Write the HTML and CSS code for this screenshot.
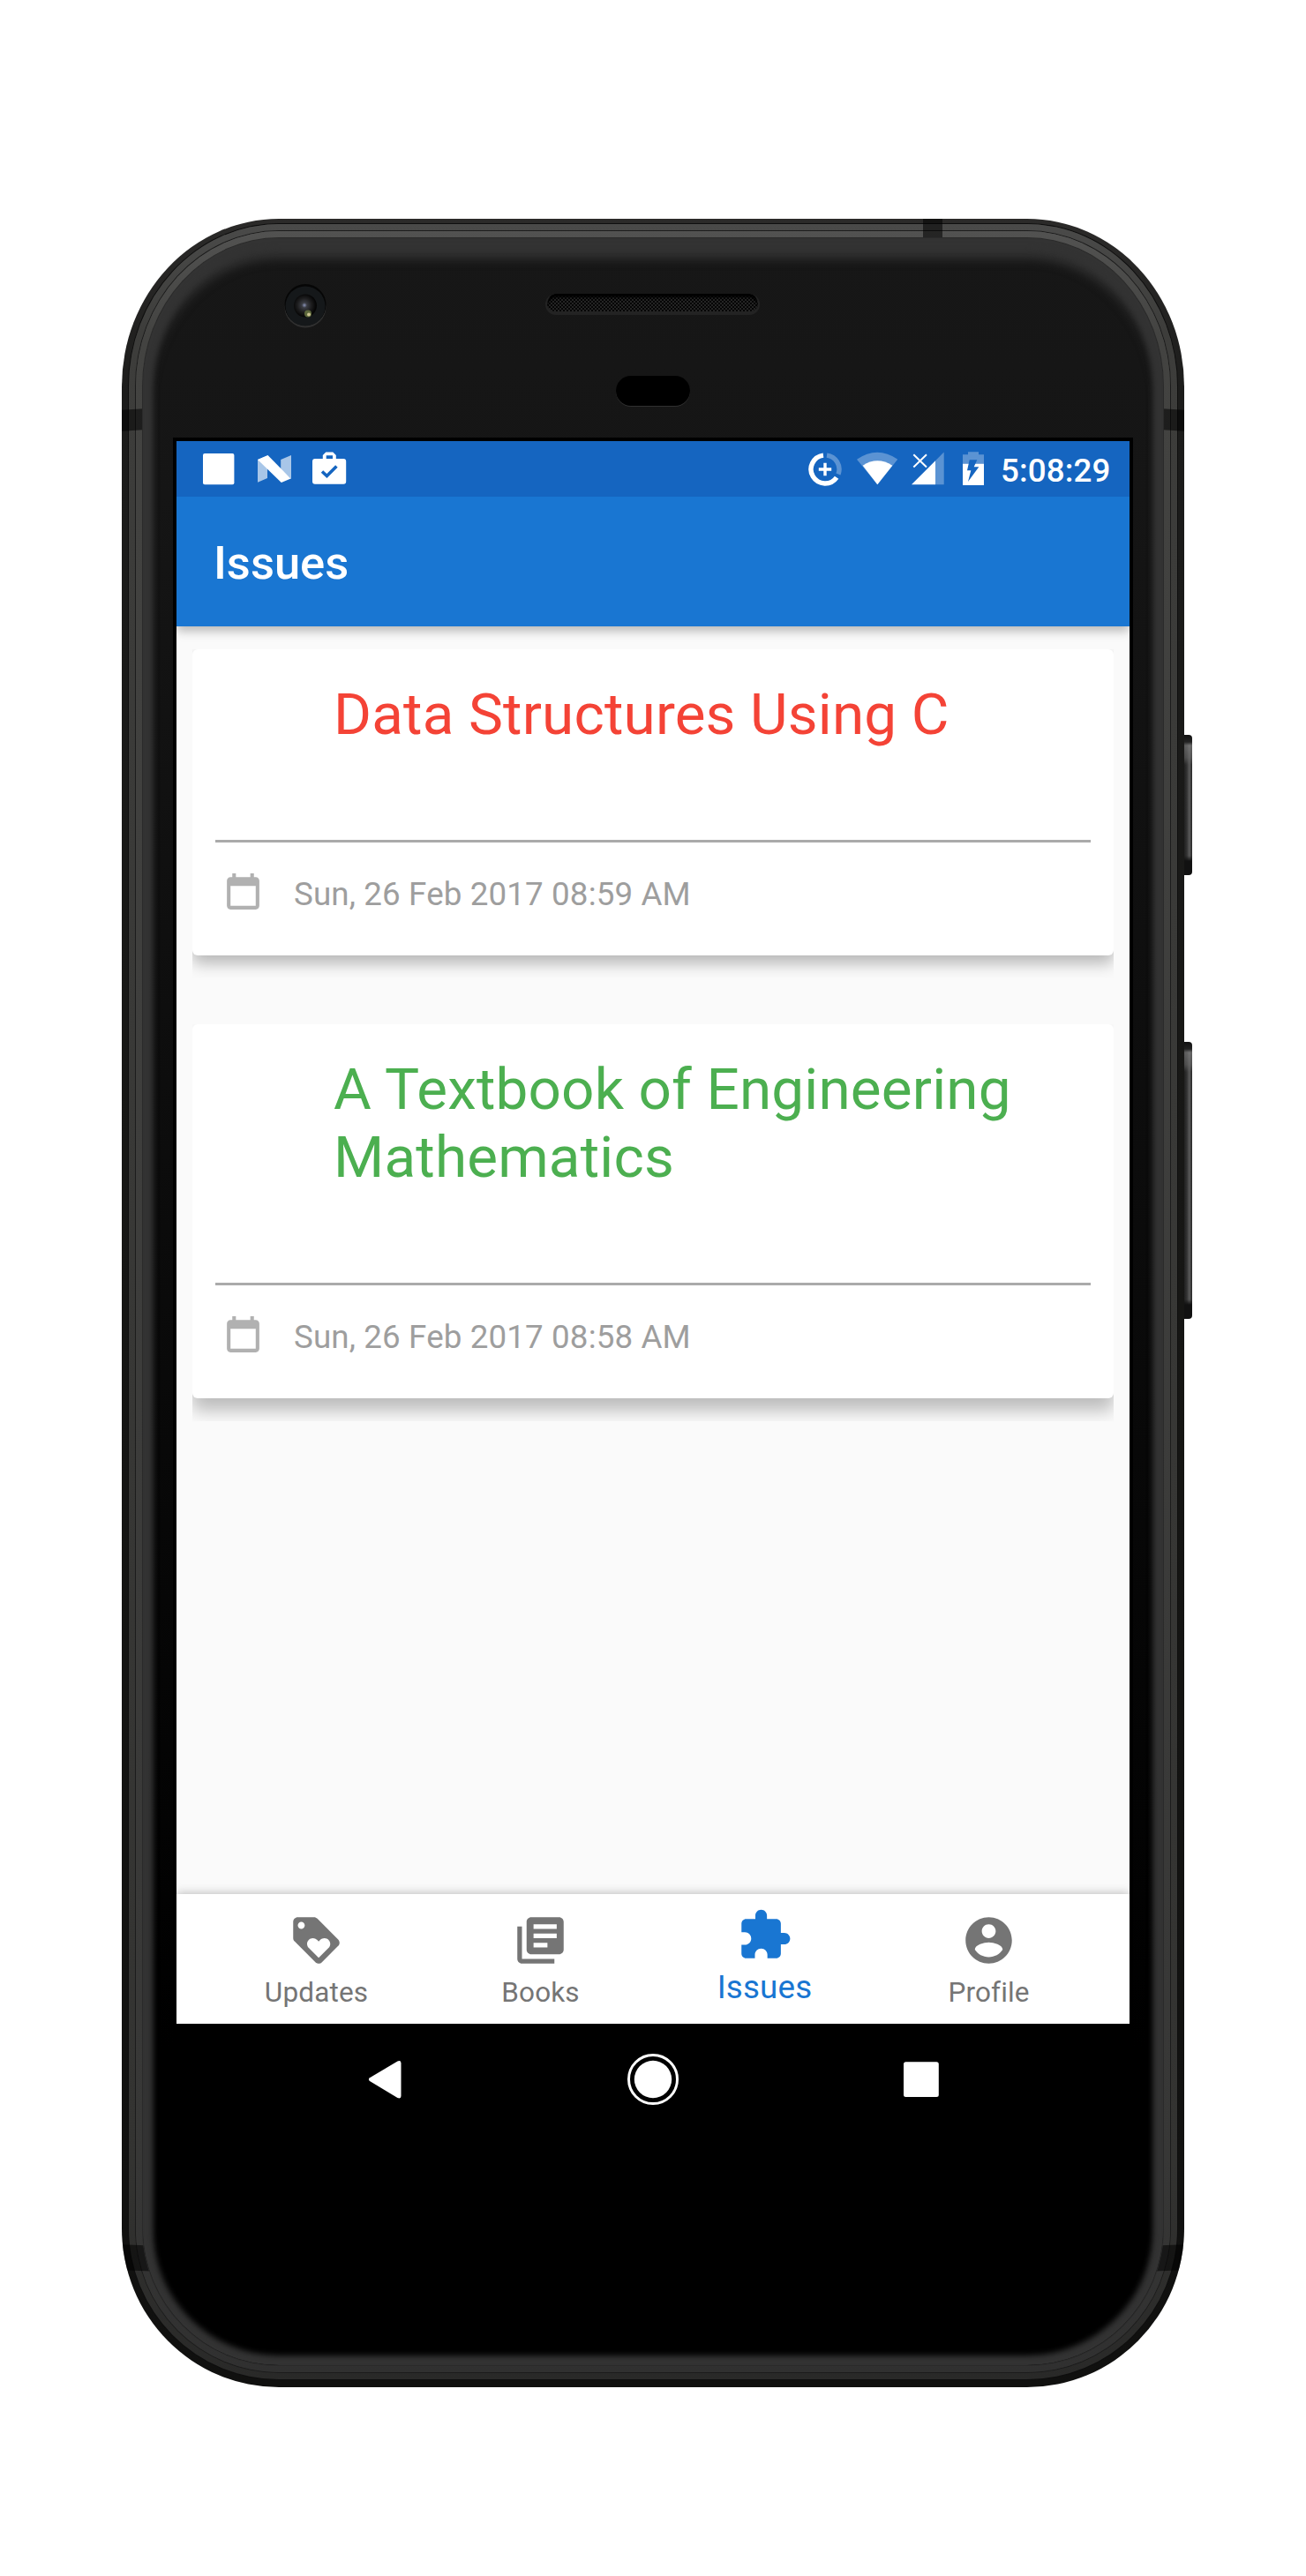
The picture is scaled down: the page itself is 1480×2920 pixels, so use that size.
FILE: index.html
```html
<!DOCTYPE html>
<html lang="en">
<head>
<meta charset="utf-8">
<title>Issues</title>
<link rel="stylesheet" href="styles.css">
</head>
<body>
<div class="device">
  <span class="side-button power"></span>
  <span class="side-button volume"></span>
  <div class="rim rim-outer">
    <span class="band band-left"></span>
    <span class="band band-right"></span>
    <span class="band band-top"></span>
    <span class="band band-low-left"></span>
    <span class="band band-low-right"></span>
    <div class="rim rim-middle">
      <div class="rim rim-inner">
        <div class="panel">
          <svg class="camera" viewBox="0 0 50 52">
            <defs>
              <radialGradient id="lens" cx=".46" cy=".48" r=".5">
                <stop offset="0" stop-color="#8a93b8"/><stop offset=".22" stop-color="#3b3d44"/>
                <stop offset=".6" stop-color="#1e1e1f"/><stop offset="1" stop-color="#050505"/>
              </radialGradient>
            </defs>
            <circle cx="25" cy="27" r="23.5" fill="#303030"/>
            <circle cx="25" cy="24.5" r="23.5" fill="#060606"/>
            <circle cx="25" cy="26" r="22.500" fill="#15181a"/>
            <circle cx="25" cy="25.5" r="13" fill="url(#lens)"/>
            <circle cx="28" cy="34.5" r="4" fill="#6d7a45" opacity=".8"/>
            <circle cx="29" cy="35.5" r="2" fill="#c9c290"/>
          </svg>
          <span class="speaker"></span>
          <span class="sensor"></span>

          <div class="screen">
            <header class="status-bar">
              <svg class="st-square" width="36" height="63" viewBox="0 0 36 63"><rect x="0" y="14" width="35.4" height="35.3" rx="2" fill="#fff"/></svg>
              <svg class="st-n" width="38" height="63" viewBox="0 0 38 63" fill="#fff"><path d="M0 21l11-4.500V42L0 46.700zM26.200 21L38 16v27l-11.800-11z" opacity=".63"/><path d="M0 21l11.500-5L37.500 42.500 26.800 47z"/></svg>
              <svg class="st-bag" width="39" height="63" viewBox="0 0 39 63"><path fill="#fff" fill-rule="evenodd" d="M3 20h8.800v-4l3.500-3.500h8L26.800 16v4h8.400a3 3 0 0 1 3 3v22.700a3 3 0 0 1-3 3H3a3 3 0 0 1-3-3V23a3 3 0 0 1 3-3zM15.700 20H23v-3.700h-7.300z"/><path d="M11 34.500l5.400 5 11-11" fill="none" stroke="#1565c0" stroke-width="3.600"/></svg>
              <svg class="st-data" width="38" height="63" viewBox="0 0 38 63" fill="none" stroke="#fff" stroke-width="5.400"><path d="M17 16.100A16 16 0 1 0 32.100 41.200"/><path d="M21 16.100A16 16 0 0 1 34 37.500" opacity=".3"/><path d="M11.800 32h14.400M19 24.800v14.400" stroke-width="3.400"/></svg>
              <svg class="st-wifi" width="46" height="63" viewBox="0 0 46 63" fill="#fff"><path d="M0 20.700Q23.200 4.800 46.300 20.700L23.300 49.300z" opacity=".3"/><path d="M6.700 27.700Q23.300 16.800 40.300 27.700L23.300 49.300z"/></svg>
              <svg class="st-signal" width="37" height="63" viewBox="0 0 37 63" fill="#fff"><path d="M27 22.300l9.700-9.700v36.700H27z" opacity=".3"/><path d="M0 49.300l27-27v27z"/><path d="M2.300 15.300l14.700 14.200M17 15.300L2.300 29.500" stroke="#fff" stroke-width="2"/></svg>
              <svg class="st-battery" width="24" height="63" viewBox="0 0 24 63"><path d="M0 15.300h6v-3h12v3h6v10.400H0z" fill="#fff" opacity=".3"/><path d="M0 25.700h24V50H0z" fill="#fff"/><path d="M7.700 21.300h8.600l-3.600 8h5.600L6 46l3.300-12.700H5z" fill="#1565c0"/></svg>
              <span class="clock">5:08:29</span>
            </header>

            <div class="toolbar">Issues</div>

            <main class="content">
              <article class="card">
                <h2 class="card-title overdue">Data Structures Using C</h2>
                <div class="card-date">
                  <svg class="cal" viewBox="0 0 24 24"><path d="M19 3h-1V1h-2v2H8V1H6v2H5c-1.110 0-1.990.9-1.990 2L3 19c0 1.100.890 2 2 2h14c1.100 0 2-.9 2-2V5c0-1.100-.9-2-2-2zm0 16H5V8h14v11z"/></svg>
                  <span>Sun, 26 Feb 2017 08:59 AM</span>
                </div>
              </article>
              <article class="card raised">
                <h2 class="card-title open">A Textbook of Engineering Mathematics</h2>
                <div class="card-date">
                  <svg class="cal" viewBox="0 0 24 24"><path d="M19 3h-1V1h-2v2H8V1H6v2H5c-1.110 0-1.990.9-1.990 2L3 19c0 1.100.890 2 2 2h14c1.100 0 2-.9 2-2V5c0-1.100-.9-2-2-2zm0 16H5V8h14v11z"/></svg>
                  <span>Sun, 26 Feb 2017 08:58 AM</span>
                </div>
              </article>
            </main>

            <nav class="tabs">
              <div class="tab">
                <svg viewBox="0 0 24 24"><path d="M21.410 11.580l-9-9C12.050 2.220 11.550 2 11 2H4c-1.100 0-2 .9-2 2v7c0 .550.220 1.050.590 1.420l9 9c.360.360.860.580 1.410.580.550 0 1.050-.220 1.410-.590l7-7c.370-.360.590-.860.590-1.410 0-.550-.230-1.060-.590-1.420zM5.500 7C4.670 7 4 6.330 4 5.500S4.670 4 5.500 4 7 4.670 7 5.500 6.330 7 5.500 7zm11.770 8.270L13 19.540l-4.270-4.270C8.280 14.810 8 14.190 8 13.500c0-1.380 1.120-2.500 2.500-2.500.690 0 1.320.280 1.770.740l.730.720.730-.730c.450-.450 1.080-.730 1.770-.730 1.380 0 2.500 1.120 2.500 2.500 0 .690-.280 1.320-.730 1.770z"/></svg>
                <span>Updates</span>
              </div>
              <div class="tab">
                <svg viewBox="0 0 24 24"><path d="M4 6H2v14c0 1.100.9 2 2 2h14v-2H4V6zm16-4H8c-1.100 0-2 .9-2 2v12c0 1.100.9 2 2 2h12c1.100 0 2-.9 2-2V4c0-1.100-.9-2-2-2zm-1 9H9V9h10v2zm-4 4H9v-2h6v2zm4-8H9V5h10v2z"/></svg>
                <span>Books</span>
              </div>
              <div class="tab active">
                <svg viewBox="0 0 24 24"><path d="M20.500 11H19V7c0-1.100-.9-2-2-2h-4V3.500C13 2.120 11.880 1 10.500 1S8 2.120 8 3.500V5H4c-1.100 0-1.990.9-1.990 2v3.800H3.500c1.490 0 2.700 1.210 2.700 2.700s-1.210 2.700-2.700 2.700H2V20c0 1.100.9 2 2 2h3.800v-1.500c0-1.490 1.210-2.700 2.700-2.700 1.490 0 2.700 1.210 2.700 2.700V22H17c1.100 0 2-.9 2-2v-4h1.500c1.380 0 2.500-1.120 2.500-2.500S21.880 11 20.500 11z"/></svg>
                <span>Issues</span>
              </div>
              <div class="tab">
                <svg viewBox="0 0 24 24"><path d="M12 2C6.480 2 2 6.480 2 12s4.480 10 10 10 10-4.480 10-10S17.520 2 12 2zm0 3c1.660 0 3 1.340 3 3s-1.340 3-3 3-3-1.340-3-3 1.340-3 3-3zm0 14.200c-2.500 0-4.710-1.280-6-3.220.030-1.990 4-3.080 6-3.080 1.990 0 5.970 1.090 6 3.080-1.290 1.940-3.500 3.220-6 3.220z"/></svg>
                <span>Profile</span>
              </div>
            </nav>

            <div class="system-nav">
              <svg width="60" height="60" viewBox="0 0 60 60"><path d="M12 28.200q-2.300 1.900 0 3.800L43.500 51q4 1.500 4-2V11.500q-.3-3.500-4-2z" fill="#fff"/></svg>
              <svg width="60" height="60" viewBox="0 0 60 60"><circle cx="30" cy="30" r="27.500" fill="none" stroke="#fff" stroke-width="3"/><circle cx="30" cy="30" r="21.200" fill="#fff"/></svg>
              <svg width="60" height="60" viewBox="0 0 60 60"><rect x="11" y="10.300" width="39.800" height="39.800" rx="2.500" fill="#fff"/></svg>
            </div>
          </div>
        </div>
      </div>
    </div>
  </div>
</div>
</body>
</html>
```
FILE: styles.css
```css
* { box-sizing: border-box; }
body {
  margin: 0;
  padding-top: 248px;
  height: 2920px;
  background: #fff;
  font-family: Roboto, "Liberation Sans", sans-serif;
}
svg { display: block; flex: none; }

/* Handset body */
.device { position: relative; width: 1204px; height: 2458px; margin: 0 auto; }
.rim-outer {
  position: relative;
  height: 2458px;
  padding: 6px 8px 9px;
  overflow: hidden;
  border-radius: 178px / 190px 190px 180px 180px;
  background: linear-gradient(#2b2a29, #1c1c1b 8%, #161614 50%, #10100f);
}
.rim-middle {
  height: 2443px;
  padding: 8px;
  border-radius: 170px / 184px 184px 171px 171px;
  background: linear-gradient(#4a4a49, #3d3d3b 5%, #333331 90%, #292928);
  box-shadow: 0 0 0 1px #0e0e0e;
}
.rim-inner {
  height: 2427px;
  padding: 8px;
  border-radius: 162px / 176px 176px 163px 163px;
  background: linear-gradient(#525251, #434341 5%, #373736 90%, #303030);
  box-shadow: 0 0 0 1px #1c1c1c;
}
.panel {
  position: relative;
  z-index: 2;
  height: 2411px;
  padding: 226px 34px 0;
  border-radius: 154px / 168px 168px 155px 155px;
  background: linear-gradient(#171717, #151515 12%, #0a0a0a 50%, #000 85%);
  box-shadow: inset 0 0 6px 11px #333, inset 0 17px 12px 6px #333, 0 0 0 1px #2a2a2a;
}
.band { position: absolute; z-index: 1; background: rgba(0, 0, 0, .55); }
.band-left, .band-right { top: 216px; width: 24px; height: 24px; }
.band-left { left: 0; transform: skewY(-4deg); }
.band-right { right: 0; transform: skewY(4deg); }
.band-top { left: 908px; top: 0; width: 22px; height: 22px; }
.band-low-left, .band-low-right { top: 2297px; width: 40px; height: 29px; }
.band-low-left { left: 0; transform: skewY(2deg); }
.band-low-right { right: 0; transform: skewY(-2deg); }

.side-button {
  position: absolute;
  right: -9px;
  width: 10px;
  border-radius: 0 4px 4px 0;
  background:
    linear-gradient(#111 0, #222 8px, rgba(130, 130, 130, .6) 12px, rgba(110, 110, 110, .5) 26px, rgba(0, 0, 0, 0) 34px, rgba(0, 0, 0, 0) calc(100% - 22px), #111 calc(100% - 16px), #111),
    linear-gradient(90deg, #1a1a1a, #333 40%, #5c5c5c 70%, #222);
}
.power { top: 585px; height: 159px; }
.volume { top: 933px; height: 314px; }

.camera { position: absolute; left: 159px; top: 51px; width: 50px; height: 52px; }
.speaker {
  position: absolute;
  left: 456px;
  top: 63px;
  width: 243px;
  height: 24px;
  border: solid #232323;
  border-width: 0 2px 4px;
  border-radius: 12px;
  background: repeating-conic-gradient(#242424 0 25%, #050505 0 50%) 0 0 / 4px 4px;
  box-shadow: inset 0 4px 3px #000;
}
.sensor {
  position: absolute;
  left: 536px;
  top: 156px;
  width: 84px;
  height: 34px;
  border-radius: 17px;
  background: #000;
  box-shadow: 0 1px 0 #303030;
}

/* Display */
.screen {
  display: flex;
  flex-direction: column;
  width: 1088px;
  height: 1928px;
  border: 4px solid #000;
  background: #fafafa;
}
.status-bar {
  display: flex;
  align-items: center;
  flex: none;
  height: 63px;
  padding-left: 30px;
  background: #1565c0;
  color: #fff;
}
.st-n { margin-left: 26px; }
.st-bag { margin-left: 24px; }
.st-data { margin-left: 523px; }
.st-wifi { margin-left: 17px; }
.st-signal { margin-left: 16px; }
.st-battery { margin-left: 21px; }
.clock {
  margin-left: 19px;
  padding-top: 3px;
  font-size: 36.75px;
  font-weight: 500;
  line-height: 43px;
  letter-spacing: .1px;
  white-space: nowrap;
}
.toolbar {
  position: relative;
  flex: none;
  height: 147px;
  padding-left: 42px;
  background: #1976d2;
  box-shadow: 0 5px 11px rgba(0, 0, 0, .28);
  clip-path: inset(0 0 -24px 0);
  color: #fff;
  font-size: 52.5px;
  font-weight: 500;
  line-height: 151px;
}
.content {
  display: flex;
  flex-direction: column;
  gap: 78px;
  flex: 1;
  padding: 26px 18px 0;
}
.card {
  height: 347px;
  padding: 35px 26px 0;
  border-radius: 6px;
  background: #fff;
  box-shadow: 0 9px 18px rgba(0, 0, 0, .28);
  clip-path: inset(0 0 -26px 0);
}
.card.raised { height: 424px; box-shadow: 0 14px 19px rgba(0, 0, 0, .25); }
.card-title {
  margin: 0;
  padding: 0 50px 104px 134px;
  border-bottom: 3px solid #aaa;
  font-size: 65.625px;
  font-weight: 400;
  line-height: 77px;
  letter-spacing: .16px;
}
.overdue { color: #f44336; }
.open { color: #4caf50; }
.card-date {
  display: flex;
  gap: 33px;
  padding: 33px 0 0 7px;
  color: #9e9e9e;
  font-size: 36.75px;
  line-height: 51px;
  letter-spacing: .12px;
}
.cal { width: 49px; height: 49px; fill: #b1b1b1; }

.tabs {
  display: flex;
  flex: none;
  height: 147px;
  padding: 0 31.5px;
  background: #fff;
  box-shadow: 0 -1px 10px rgba(0, 0, 0, .25);
  clip-path: inset(-14px 0 0 0);
}
.tab {
  display: flex;
  flex-direction: column;
  align-items: center;
  width: 254px;
  padding-top: 21px;
  color: #757575;
  font-size: 31.5px;
  line-height: 37px;
  letter-spacing: .15px;
}
.tab svg { width: 63px; height: 63px; fill: currentColor; }
.tab span { margin-top: 9px; }
.tab.active { padding-top: 15px; color: #1976d2; font-size: 36.75px; line-height: 43px; }
.tab.active span { margin-top: 6px; }
.system-nav {
  display: flex;
  align-items: center;
  justify-content: center;
  gap: 243px;
  flex: none;
  height: 126px;
  background: #000;
}
```
